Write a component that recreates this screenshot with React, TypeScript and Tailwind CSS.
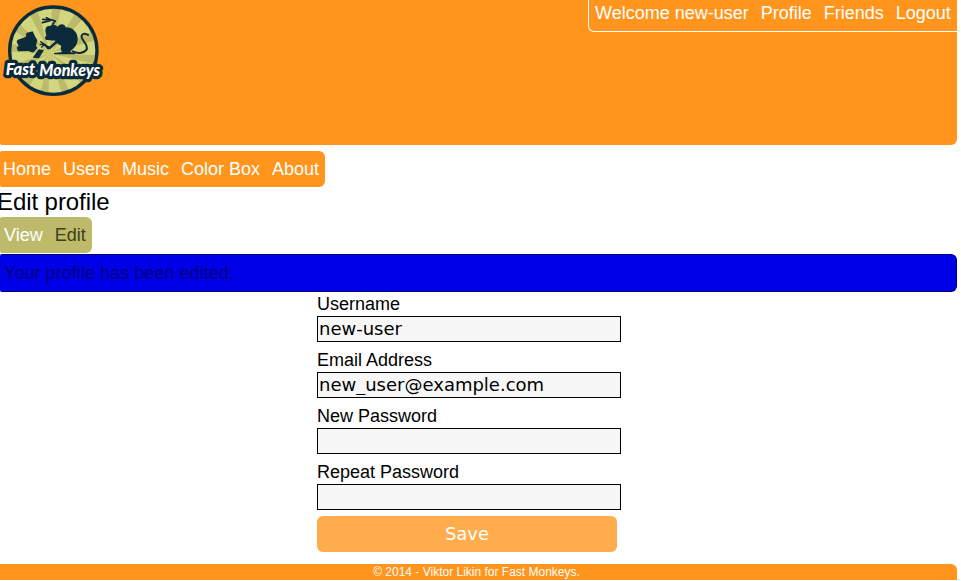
import React from "react";

const RAYS = Array.from({ length: 12 }, (_, i) => i * 30);

function Logo() {
  return (
    <svg className="block h-[100px] w-[110px]" viewBox="0 0 330 300" role="img" aria-label="Fast Monkeys">
      <defs>
        <clipPath id="disc">
          <circle cx="160" cy="152" r="128" />
        </clipPath>
      </defs>
      <circle cx="160" cy="152" r="131" fill="#d2d67f" />
      <g clipPath="url(#disc)" fill="#bbba69">
        {RAYS.map((angle) => (
          <path key={angle} d="M150 160L132 -20L168 -20Z" transform={`rotate(${angle + 8} 150 160)`} />
        ))}
      </g>
      <circle cx="160" cy="152" r="131" fill="none" stroke="#0c2b3a" strokeWidth="10" />
      <g fill="#0c2b3a">
        <path d="M52 120L78 110L79 99L98 94L105 109L112 121L108 137L113 144L99 158L86 153L54 154L50 143L56 137L50 126Z" />
        <path d="M116 148L132 150L117 175L98 173Z" />
        <path d="M137 98C134 84 140 76 150 78C157 71 167 74 173 80C179 71 194 70 197 82C218 82 232 96 233 115C234 130 226 143 215 150C207 156 212 157 224 158L226 163L162 163L162 159L187 156C182 153 181 145 184 138L171 130L150 148L142 148L133 137L150 139L167 122L141 120C134 119 133 111 139 107Z" />
      </g>
      <g fill="none" stroke="#0c2b3a" strokeLinecap="round" strokeLinejoin="round">
        <path d="M163 80L158 73L166 63L149 58L139 53M150 60L128 58M150 62L127 68" strokeWidth="5" />
        <path d="M148 143L133 132L121 133M133 132L122 125M135 133L125 141" strokeWidth="4" />
        <path d="M218 154C231 161 250 161 259 150C269 135 240 119 245 107C248 100 258 99 264 105" strokeWidth="6" />
      </g>
      <g
        fontFamily="Lato, 'Liberation Sans', sans-serif"
        fontWeight="900"
        fontStyle="italic"
        fontSize="51"
        fill="#fff"
        strokeLinejoin="round"
      >
        <g stroke="#0c2b3a" strokeWidth="20">
          <text x="17" y="226" textLength="88" lengthAdjust="spacingAndGlyphs">Fast</text>
          <text x="118" y="227" textLength="182" lengthAdjust="spacingAndGlyphs">Monkeys</text>
        </g>
        <g aria-hidden="true">
          <text x="17" y="226" textLength="88" lengthAdjust="spacingAndGlyphs">Fast</text>
          <text x="118" y="227" textLength="182" lengthAdjust="spacingAndGlyphs">Monkeys</text>
        </g>
      </g>
    </svg>
  );
}

function Field({ label, value = "", type = "text" }: { label: string; value?: string; type?: string }) {
  return (
    <label className="block h-14">
      <span className="block h-6 leading-6">{label}</span>
      <input
        type={type}
        defaultValue={value}
        className="block h-[26px] w-[304px] border border-black bg-[#f7f7f7] px-px pb-0.5 font-['DejaVu_Sans',sans-serif] text-[18px] leading-[22px] outline-none"
      />
    </label>
  );
}

export default function App() {
  return (
    <div className="h-[581px] w-[961px] overflow-hidden bg-white pr-1 font-['Liberation_Sans',Arial,sans-serif] text-[18px] leading-6 text-black">
      <header className="flex h-[145px] items-start justify-between rounded-br-md rounded-bl-[2px] bg-[#ff951c]">
        <Logo />
        <nav className="flex h-8 w-[369px] gap-3 rounded-bl-md border-b border-l border-white pt-px pl-1.5 whitespace-nowrap text-white">
          <span>Welcome new-user</span>
          <a>Profile</a>
          <a>Friends</a>
          <a>Logout</a>
        </nav>
      </header>
      <nav className="mt-1.5 flex h-9 w-[325px] items-center gap-3 rounded-r-md rounded-l-[2px] bg-[#ff951c] pl-[3px] whitespace-nowrap text-white">
        <a>Home</a>
        <a>Users</a>
        <a>Music</a>
        <a>Color Box</a>
        <a>About</a>
      </nav>
      <h1 className="-ml-[3px] h-[30px] text-[24px] leading-[30px] tracking-[-0.08px]">Edit profile</h1>
      <nav className="flex h-9 w-[92px] items-center gap-3 rounded-r-md rounded-l-[2px] bg-[#bdbb6b] pl-1 text-white">
        <a>View</a>
        <a className="text-[#3f3f14]">Edit</a>
      </nav>
      <div className="mt-px flex h-[38px] items-center rounded-r-md rounded-l-[2px] border-y border-r border-[#000080] bg-[#0000e6] pl-1 tracking-[0.05px] text-[#000080]">
        Your profile has been edited.
      </div>
      <form className="ml-[317px] w-[304px]" onSubmit={(e) => e.preventDefault()}>
        <Field label="Username" value="new-user" />
        <Field label="Email Address" value="new_user@example.com" />
        <Field label="New Password" type="password" />
        <Field label="Repeat Password" type="password" />
        <button className="block h-9 w-[300px] rounded-md bg-[#ffac4c] font-['DejaVu_Sans',sans-serif] text-[18px] text-white">
          Save
        </button>
      </form>
      <footer className="mt-3 h-4 rounded-tr-md bg-[#ff951c] pr-1 text-center text-[12px] leading-4 text-white">
        © 2014 - Viktor Likin for Fast Monkeys.
      </footer>
    </div>
  );
}
